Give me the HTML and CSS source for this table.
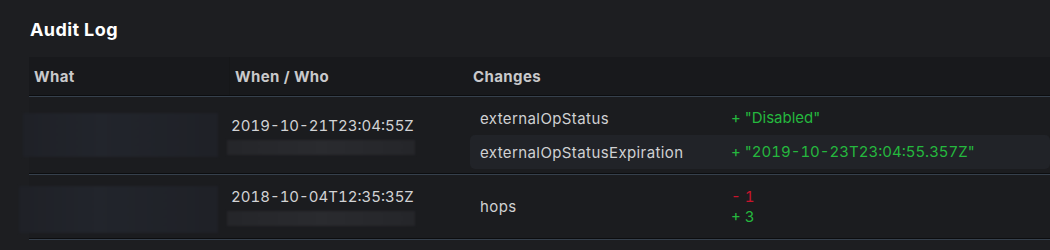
FILE: index.html
```html
<!DOCTYPE html>
<html>
<head>
<meta charset="utf-8">
<link rel="stylesheet" href="styles.css">
</head>
<body>
<div class="page">
  <h1 class="title">Audit Log</h1>
  <div class="table">
    <div class="row head">
      <div class="cell what">What</div>
      <div class="cell when">When / Who</div>
      <div class="cell changes">Changes</div>
    </div>
    <div class="row body r1">
      <div class="cell what"><div class="blur box1"></div></div>
      <div class="cell when">
        <div class="date">2019-10-21T23:04:55Z</div>
        <div class="blur who"></div>
      </div>
      <div class="cell changes">
        <div class="ch">
          <div class="chrow"><span class="key">externalOpStatus</span><span class="vals"><span class="add">+ "Disabled"</span></span></div>
          <div class="chrow alt"><span class="key">externalOpStatusExpiration</span><span class="vals"><span class="add">+ "2019-10-23T23:04:55.357Z"</span></span></div>
        </div>
      </div>
    </div>
    <div class="row body r2">
      <div class="cell what"><div class="blur box2"></div></div>
      <div class="cell when">
        <div class="date">2018-10-04T12:35:35Z</div>
        <div class="blur who"></div>
      </div>
      <div class="cell changes">
        <div class="ch">
          <div class="chrow tall"><span class="key">hops</span><span class="vals"><span class="del">- 1</span><span class="add">+ 3</span></span></div>
        </div>
      </div>
    </div>
  </div>
</div>
</body>
</html>
```

FILE: styles.css
```css
html, body {
  margin: 0;
  padding: 0;
  background: #1d1e21;
  width: 1050px;
  height: 250px;
  overflow: hidden;
  font-family: Inter, "Noto Sans", sans-serif;
}
.page {
  padding: 18px 0 0 29px;
}
.title {
  margin: 0 0 0 1px;
  font-size: 18px;
  line-height: 24px;
  font-weight: 700;
  letter-spacing: 0.4px;
  color: #ffffff;
  height: 39px;
}
.table {
  display: flex;
  flex-direction: column;
}
.row {
  display: grid;
  grid-template-columns: 200px 240px 1fr;
  border-bottom: 1px solid #0c0d0f;
  box-shadow: 0 1px 0 #36404c;
  margin-bottom: 1px;
}
.head {
  background: #18191c;
  height: 38px;
}
.head .cell {
  font-size: 15px;
  font-weight: 700;
  letter-spacing: 0.4px;
  color: #c9c9cb;
  display: flex;
  align-items: center;
  padding-left: 5px;
}
.head .when { padding-left: 5px; border-left: 1px solid #161719; }
.head .changes { padding-left: 4px; }
.body { background: #1b1c1f; }
.body .cell {
  display: flex;
  flex-direction: column;
  justify-content: center;
}
.r1 { height: 76px; }
.r2 { height: 63px; }
.blur {
  background: linear-gradient(90deg, #1f2127, #22252c 40%, #1f2127);
  filter: blur(1px);
}
.box1 { width: 195px; height: 44px; margin-left: -6px; }
.box2 { width: 199px; height: 47px; margin-left: -10px; margin-top: 5px; }
.body .when { padding-left: 2px; }
.date {
  font-size: 15px;
  line-height: 20px;
  font-feature-settings: "tnum" 1;
  color: #d2d3d5;
}
.who {
  width: 188px;
  height: 15px;
  margin-left: -4px;
  margin-top: 4px;
  background: linear-gradient(90deg, #25262a, #2a2b2f 50%, #25262a);
}
.ch {
  display: flex;
  flex-direction: column;
  margin-left: 1px;
}
.chrow {
  display: grid;
  grid-template-columns: 251px 1fr;
  align-items: center;
  height: 34px;
  padding-left: 10px;
  font-size: 15px;
  color: #d0d1d3;
  border-radius: 5px;
}
.key { letter-spacing: 0.4px; }
.alt { background: #212328; }
.tall { height: 63px; }
.vals {
  display: flex;
  flex-direction: column;
  line-height: 20px;
  font-feature-settings: "tnum" 1;
}
.add { color: #25b83e; }
.del { color: #c8142c; }
```
